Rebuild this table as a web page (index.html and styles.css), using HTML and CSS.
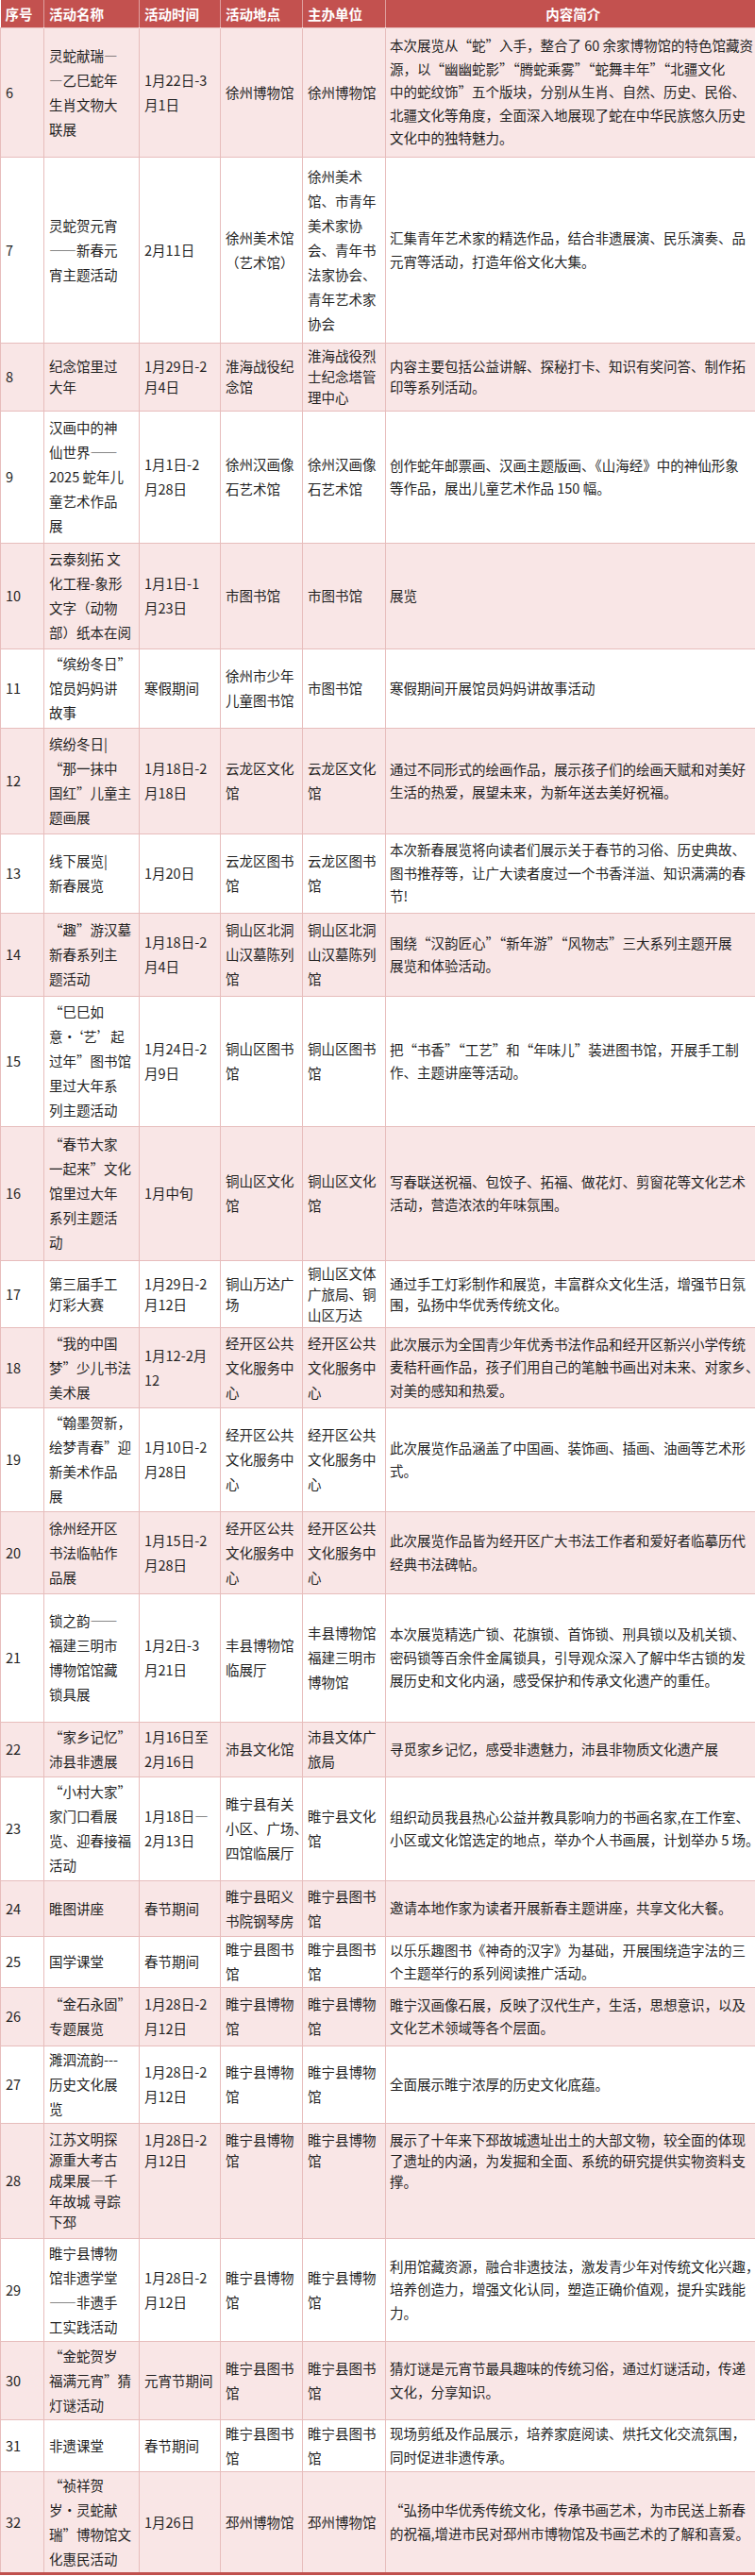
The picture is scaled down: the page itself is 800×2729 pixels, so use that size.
FILE: index.html
```html
<!DOCTYPE html>
<html lang="zh-CN">
<head>
<meta charset="utf-8">
<title>活动一览</title>
<link rel="stylesheet" href="styles.css">
</head>
<body>
<table class="events">
<colgroup>
<col class="c-no"><col class="c-name"><col class="c-time"><col class="c-place"><col class="c-host"><col class="c-desc">
</colgroup>
<thead>
<tr class="head"><th>序号</th><th>活动名称</th><th>活动时间</th><th>活动地点</th><th>主办单位</th><th class="center">内容简介</th></tr>
</thead>
<tbody>
<tr class="r6"><td>6</td><td>灵蛇献瑞—<br>—乙巳蛇年<br>生肖文物大<br>联展</td><td>1月22日-3<br>月1日</td><td>徐州博物馆</td><td>徐州博物馆</td><td class="desc">本次展览从“蛇”入手，整合了 60 余家博物馆的特色馆藏资<br>源，以“幽幽蛇影”“腾蛇乘雾”“蛇舞丰年”“北疆文化<br>中的蛇纹饰”五个版块，分别从生肖、自然、历史、民俗、<br>北疆文化等角度，全面深入地展现了蛇在中华民族悠久历史<br>文化中的独特魅力。</td></tr>
<tr class="r7"><td>7</td><td>灵蛇贺元宵<br>——新春元<br>宵主题活动</td><td>2月11日</td><td>徐州美术馆<br>（艺术馆）</td><td>徐州美术<br>馆、市青年<br>美术家协<br>会、青年书<br>法家协会、<br>青年艺术家<br>协会</td><td class="desc">汇集青年艺术家的精选作品，结合非遗展演、民乐演奏、品<br>元宵等活动，打造年俗文化大集。</td></tr>
<tr class="r8 tight"><td>8</td><td>纪念馆里过<br>大年</td><td>1月29日-2<br>月4日</td><td>淮海战役纪<br>念馆</td><td>淮海战役烈<br>士纪念塔管<br>理中心</td><td class="desc">内容主要包括公益讲解、探秘打卡、知识有奖问答、制作拓<br>印等系列活动。</td></tr>
<tr class="r9"><td>9</td><td>汉画中的神<br>仙世界——<br>2025 蛇年儿<br>童艺术作品<br>展</td><td>1月1日-2<br>月28日</td><td>徐州汉画像<br>石艺术馆</td><td>徐州汉画像<br>石艺术馆</td><td class="desc">创作蛇年邮票画、汉画主题版画、《山海经》中的神仙形象<br>等作品，展出儿童艺术作品 150 幅。</td></tr>
<tr class="r10"><td>10</td><td>云泰刻拓 文<br>化工程-象形<br>文字（动物<br>部）纸本在阅</td><td>1月1日-1<br>月23日</td><td>市图书馆</td><td>市图书馆</td><td class="desc">展览</td></tr>
<tr class="r11"><td>11</td><td>“缤纷冬日”<br>馆员妈妈讲<br>故事</td><td>寒假期间</td><td>徐州市少年<br>儿童图书馆</td><td>市图书馆</td><td class="desc">寒假期间开展馆员妈妈讲故事活动</td></tr>
<tr class="r12"><td>12</td><td>缤纷冬日|<br>“那一抹中<br>国红”儿童主<br>题画展</td><td>1月18日-2<br>月18日</td><td>云龙区文化<br>馆</td><td>云龙区文化<br>馆</td><td class="desc">通过不同形式的绘画作品，展示孩子们的绘画天赋和对美好<br>生活的热爱，展望未来，为新年送去美好祝福。</td></tr>
<tr class="r13"><td>13</td><td>线下展览|<br>新春展览</td><td>1月20日</td><td>云龙区图书<br>馆</td><td>云龙区图书<br>馆</td><td class="desc">本次新春展览将向读者们展示关于春节的习俗、历史典故、<br>图书推荐等，让广大读者度过一个书香洋溢、知识满满的春<br>节!</td></tr>
<tr class="r14"><td>14</td><td>“趣”游汉墓<br>新春系列主<br>题活动</td><td>1月18日-2<br>月4日</td><td>铜山区北洞<br>山汉墓陈列<br>馆</td><td>铜山区北洞<br>山汉墓陈列<br>馆</td><td class="desc">围绕“汉韵匠心”“新年游”“风物志”三大系列主题开展<br>展览和体验活动。</td></tr>
<tr class="r15"><td>15</td><td>“巳巳如<br>意·‘艺’起<br>过年”图书馆<br>里过大年系<br>列主题活动</td><td>1月24日-2<br>月9日</td><td>铜山区图书<br>馆</td><td>铜山区图书<br>馆</td><td class="desc">把“书香”“工艺”和“年味儿”装进图书馆，开展手工制<br>作、主题讲座等活动。</td></tr>
<tr class="r16"><td>16</td><td>“春节大家<br>一起来”文化<br>馆里过大年<br>系列主题活<br>动</td><td>1月中旬</td><td>铜山区文化<br>馆</td><td>铜山区文化<br>馆</td><td class="desc">写春联送祝福、包饺子、拓福、做花灯、剪窗花等文化艺术<br>活动，营造浓浓的年味氛围。</td></tr>
<tr class="r17 tight"><td>17</td><td>第三届手工<br>灯彩大赛</td><td>1月29日-2<br>月12日</td><td>铜山万达广<br>场</td><td>铜山区文体<br>广旅局、铜<br>山区万达</td><td class="desc">通过手工灯彩制作和展览，丰富群众文化生活，增强节日氛<br>围，弘扬中华优秀传统文化。</td></tr>
<tr class="r18"><td>18</td><td>“我的中国<br>梦”少儿书法<br>美术展</td><td>1月12-2月<br>12</td><td>经开区公共<br>文化服务中<br>心</td><td>经开区公共<br>文化服务中<br>心</td><td class="desc">此次展示为全国青少年优秀书法作品和经开区新兴小学传统<br>麦秸秆画作品，孩子们用自己的笔触书画出对未来、对家乡、<br>对美的感知和热爱。</td></tr>
<tr class="r19"><td>19</td><td>“翰墨贺新，<br>绘梦青春”迎<br>新美术作品<br>展</td><td>1月10日-2<br>月28日</td><td>经开区公共<br>文化服务中<br>心</td><td>经开区公共<br>文化服务中<br>心</td><td class="desc">此次展览作品涵盖了中国画、装饰画、插画、油画等艺术形<br>式。</td></tr>
<tr class="r20"><td>20</td><td>徐州经开区<br>书法临帖作<br>品展</td><td>1月15日-2<br>月28日</td><td>经开区公共<br>文化服务中<br>心</td><td>经开区公共<br>文化服务中<br>心</td><td class="desc">此次展览作品皆为经开区广大书法工作者和爱好者临摹历代<br>经典书法碑帖。</td></tr>
<tr class="r21"><td>21</td><td>锁之韵——<br>福建三明市<br>博物馆馆藏<br>锁具展</td><td>1月2日-3<br>月21日</td><td>丰县博物馆<br>临展厅</td><td>丰县博物馆<br>福建三明市<br>博物馆</td><td class="desc">本次展览精选广锁、花旗锁、首饰锁、刑具锁以及机关锁、<br>密码锁等百余件金属锁具，引导观众深入了解中华古锁的发<br>展历史和文化内涵，感受保护和传承文化遗产的重任。</td></tr>
<tr class="r22"><td>22</td><td>“家乡记忆”<br>沛县非遗展</td><td>1月16日至<br>2月16日</td><td>沛县文化馆</td><td>沛县文体广<br>旅局</td><td class="desc">寻觅家乡记忆，感受非遗魅力，沛县非物质文化遗产展</td></tr>
<tr class="r23"><td>23</td><td>“小村大家”<br>家门口看展<br>览、迎春接福<br>活动</td><td>1月18日—<br>2月13日</td><td>睢宁县有关<br>小区、广场、<br>四馆临展厅</td><td>睢宁县文化<br>馆</td><td class="desc">组织动员我县热心公益并教具影响力的书画名家,在工作室、<br>小区或文化馆选定的地点，举办个人书画展，计划举办 5 场。</td></tr>
<tr class="r24"><td>24</td><td>睢图讲座</td><td>春节期间</td><td>睢宁县昭义<br>书院钢琴房</td><td>睢宁县图书<br>馆</td><td class="desc">邀请本地作家为读者开展新春主题讲座，共享文化大餐。</td></tr>
<tr class="r25"><td>25</td><td>国学课堂</td><td>春节期间</td><td>睢宁县图书<br>馆</td><td>睢宁县图书<br>馆</td><td class="desc">以乐乐趣图书《神奇的汉字》为基础，开展围绕造字法的三<br>个主题举行的系列阅读推广活动。</td></tr>
<tr class="r26"><td>26</td><td>“金石永固”<br>专题展览</td><td>1月28日-2<br>月12日</td><td>睢宁县博物<br>馆</td><td>睢宁县博物<br>馆</td><td class="desc">睢宁汉画像石展，反映了汉代生产，生活，思想意识，以及<br>文化艺术领域等各个层面。</td></tr>
<tr class="r27"><td>27</td><td>濉泗流韵---<br>历史文化展<br>览</td><td>1月28日-2<br>月12日</td><td>睢宁县博物<br>馆</td><td>睢宁县博物<br>馆</td><td class="desc">全面展示睢宁浓厚的历史文化底蕴。</td></tr>
<tr class="r28 tight"><td>28</td><td>江苏文明探<br>源重大考古<br>成果展—千<br>年故城 寻踪<br>下邳</td><td class="top">1月28日-2<br>月12日</td><td class="top">睢宁县博物<br>馆</td><td class="top">睢宁县博物<br>馆</td><td class="desc top">展示了十年来下邳故城遗址出土的大部文物，较全面的体现<br>了遗址的内涵，为发掘和全面、系统的研究提供实物资料支<br>撑。</td></tr>
<tr class="r29"><td>29</td><td>睢宁县博物<br>馆非遗学堂<br>——非遗手<br>工实践活动</td><td>1月28日-2<br>月12日</td><td>睢宁县博物<br>馆</td><td>睢宁县博物<br>馆</td><td class="desc">利用馆藏资源，融合非遗技法，激发青少年对传统文化兴趣，<br>培养创造力，增强文化认同，塑造正确价值观，提升实践能<br>力。</td></tr>
<tr class="r30"><td>30</td><td>“金蛇贺岁<br>福满元宵”猜<br>灯谜活动</td><td>元宵节期间</td><td>睢宁县图书<br>馆</td><td>睢宁县图书<br>馆</td><td class="desc">猜灯谜是元宵节最具趣味的传统习俗，通过灯谜活动，传递<br>文化，分享知识。</td></tr>
<tr class="r31"><td>31</td><td>非遗课堂</td><td>春节期间</td><td>睢宁县图书<br>馆</td><td>睢宁县图书<br>馆</td><td class="desc">现场剪纸及作品展示，培养家庭阅读、烘托文化交流氛围，<br>同时促进非遗传承。</td></tr>
<tr class="r32"><td>32</td><td>“祯祥贺<br>岁·灵蛇献<br>瑞”博物馆文<br>化惠民活动</td><td>1月26日</td><td>邳州博物馆</td><td>邳州博物馆</td><td class="desc">“弘扬中华优秀传统文化，传承书画艺术，为市民送上新春<br>的祝福,增进市民对邳州市博物馆及书画艺术的了解和喜爱。</td></tr>
</tbody>
</table>
</body>
</html>
```
FILE: styles.css
```css
html, body {
  margin: 0;
  padding: 0;
  background: #ffffff;
}

body {
  font-family: "Noto Sans CJK SC", "Noto Sans", sans-serif;
  color: #1f1f1f;
}

.events {
  width: 800px;
  border-collapse: collapse;
  table-layout: fixed;
  border-bottom: 3px solid #c0504d;
}

.c-no { width: 46px; }
.c-name { width: 101px; }
.c-time { width: 86px; }
.c-place { width: 87px; }
.c-host { width: 88px; }
.c-desc { width: 392px; }

.head {
  height: 29px;
  background: #c3514f;
}

.head th {
  color: #ffffff;
  font-size: 14.5px;
  font-weight: 700;
  text-align: left;
  padding: 0 0 0 5px;
  border-left: 1px solid rgba(255, 255, 255, 0.45);
  white-space: nowrap;
  line-height: 27px;
}

.head th:first-child {
  border-left: none;
}

.head th.center {
  text-align: center;
}

.events td {
  font-size: 14.5px;
  line-height: 26px;
  padding: 0 0 0 5px;
  border: 1px solid #e7bdbc;
  vertical-align: middle;
  white-space: nowrap;
}

.events td.desc {
  line-height: 24.5px;
  padding-left: 4px;
}

.events tr.tight td {
  line-height: 22px;
}

.events td.top {
  vertical-align: top;
  padding-top: 6px;
}

.events tbody tr:nth-child(odd) {
  background: #f9e6e6;
}

.events tbody tr:nth-child(even) {
  background: #ffffff;
}

.r6 { height: 137px; }
.r7 { height: 197px; }
.r8 { height: 72px; }
.r9 { height: 140px; }
.r10 { height: 112px; }
.r11 { height: 84px; }
.r12 { height: 112px; }
.r13 { height: 84px; }
.r14 { height: 88px; }
.r15 { height: 138px; }
.r16 { height: 142px; }
.r17 { height: 71px; }
.r18 { height: 85px; }
.r19 { height: 110px; }
.r20 { height: 87px; }
.r21 { height: 136px; }
.r22 { height: 58px; }
.r23 { height: 110px; }
.r24 { height: 59px; }
.r25 { height: 54px; }
.r26 { height: 62px; }
.r27 { height: 82px; }
.r28 { height: 122px; }
.r29 { height: 109px; }
.r30 { height: 83px; }
.r31 { height: 55px; }
.r32 { height: 108px; }
```
